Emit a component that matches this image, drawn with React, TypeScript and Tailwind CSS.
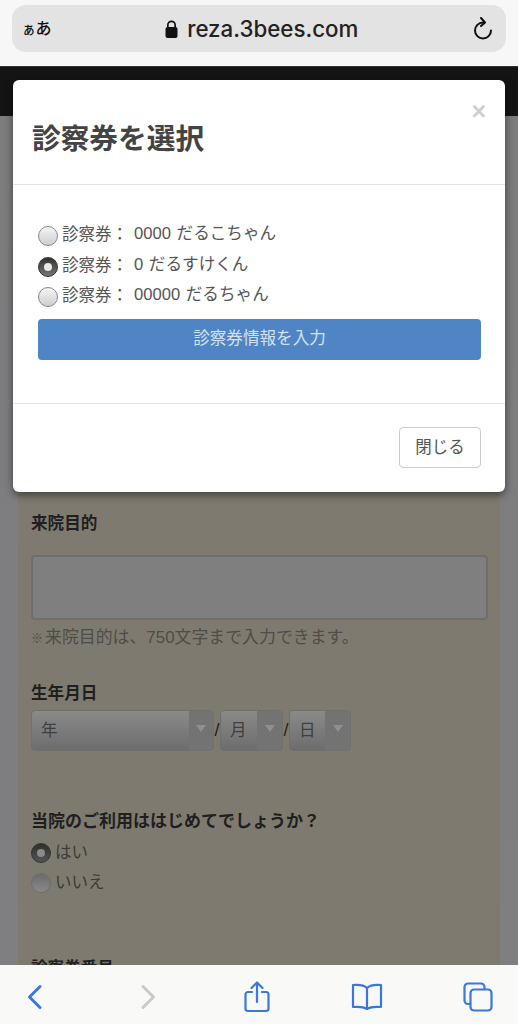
import React from "react";

const jp = "font-['Liberation_Sans','Noto_Sans_CJK_JP',sans-serif]";

function Radio({ on, dim }: { on?: boolean; dim?: boolean }) {
  if (on) {
    return (
      <span className={`flex h-[20px] w-[20px] shrink-0 items-center justify-center rounded-full border border-[#333] bg-gradient-to-b ${dim ? "from-[#2e2e2e] to-[#555]" : "from-[#333] to-[#777]"}`}>
        <span className={`h-[8px] w-[8px] rounded-full ${dim ? "bg-[#8a8a8a]" : "bg-[#e8e8e8]"}`} />
      </span>
    );
  }
  return (
    <span className={`block h-[20px] w-[20px] shrink-0 rounded-full border bg-gradient-to-b ${dim ? "border-[#6e6e6e] from-[#6a6a6a] to-[#8a8a8a]" : "border-[#8a8a8a] from-[#f4f4f4] to-[#cfcfcf]"}`} />
  );
}

function TicketRow({ on, id, name }: { on?: boolean; id: string; name: string }) {
  return (
    <div className="flex h-[30.5px] items-start">
      <span className="mt-[4px]"><Radio on={on} /></span>
      <span className="ml-[4px] w-[72px] shrink-0 whitespace-pre text-[16.5px] leading-[24px] text-[#555]">診察券：</span>
      <span className="whitespace-pre text-[16.6px] leading-[24px] text-[#555] [word-spacing:1px]">{id} {name}</span>
    </div>
  );
}

function Select({ w, label, arrowW }: { w: string; label: string; arrowW: string }) {
  return (
    <div className={`flex h-[41px] ${w} overflow-hidden rounded-[4px] border border-[#6f6f6b] bg-gradient-to-b from-[#8a8a8a] to-[#6d6d6d]`}>
      <span className="flex-1 pl-[9px] text-[16.5px] leading-[39px] text-[#3f3f3f]">{label}</span>
      <span className={`flex ${arrowW} items-start justify-center bg-[#737373] pt-[14px]`}>
        <span className="h-0 w-0 border-x-[5px] border-t-[7px] border-x-transparent border-t-[#8f8f8f]" />
      </span>
    </div>
  );
}

export default function App() {
  return (
    <div className={`relative flex h-[1024px] w-[518px] flex-col overflow-hidden bg-[#7f7f80] ${jp}`}>
      <div className="flex h-[67px] shrink-0 flex-col border-b border-[#333] bg-[#f7f7f7] px-[12px] pt-[5px]">
        <div className="flex h-[47px] items-center justify-between rounded-[14px] bg-[#e3e3e3] pl-[10px] pr-[12px]">
          <span className="text-[16px] font-medium text-[#111]"><span className="text-[13.5px]">ぁ</span>あ</span>
          <div className="flex items-center gap-[9px]">
            <svg width="13" height="18" viewBox="0 0 13 18" fill="#111">
              <path d="M2 7V5a4.5 4.5 0 0 1 9 0v2h-1.7V5a2.8 2.8 0 0 0-5.6 0v2z" />
              <rect x="0.5" y="7" width="12" height="11" rx="2" />
            </svg>
            <span className="font-['Inter',sans-serif] text-[22.3px] font-medium text-[#222]">reza.3bees.com</span>
          </div>
          <svg width="22" height="24" viewBox="0 0 22 24" fill="none" stroke="#111" strokeWidth="2" strokeLinecap="round" strokeLinejoin="round">
            <path d="M12 5.500h-1a8 8 0 1 0 8 8" />
            <path d="M9 1l4 4.500-4 3.500" />
          </svg>
        </div>
      </div>

      <div className="h-[49px] shrink-0 bg-[#141414]" />

      <div className="flex-1 overflow-hidden bg-gradient-to-b from-[#7d7d7e] to-[#7f7f82] px-[18px]">
        <div className="h-[900px] bg-[#7e7a70] pl-[13px] pr-[12px] pt-[396px]">
          <h3 className="text-[16.6px] font-bold leading-[24px] text-[#1f1f1f]">来院目的</h3>
          <div className="mt-[19px] h-[65px] rounded-[4px] border-2 border-[#6e6e6e] bg-[#7f7f80]" />
          <p className="mt-[6px] text-[16.9px] leading-[24px] text-[#4e4d47]"><span className="text-[12px]">※</span><span className="ml-[2px]">来院目的は、750文字まで入力できます。</span></p>
          <h3 className="mt-[31px] text-[16.6px] font-bold leading-[24px] text-[#1f1f1f]">生年月日</h3>
          <div className="mt-[4px] flex items-center">
            <Select w="w-[183px]" label="年" arrowW="w-[24px]" />
            <span className="w-[6px] shrink-0 text-center text-[18px] text-[#222]">/</span>
            <Select w="w-[63px]" label="月" arrowW="w-[25px]" />
            <span className="w-[6px] shrink-0 text-center text-[18px] text-[#222]">/</span>
            <Select w="w-[62px]" label="日" arrowW="w-[25px]" />
          </div>
          <h3 className="mt-[59px] text-[17px] font-bold leading-[24px] text-[#1f1f1f]">当院のご利用ははじめてでしょうか？</h3>
          <div className="mt-[6px] flex h-[30px] items-start">
            <span className="mt-[3px]"><Radio on dim /></span>
            <span className="ml-[4px] text-[16.5px] leading-[24px] text-[#3c3c38]">はい</span>
          </div>
          <div className="flex h-[30px] items-start">
            <span className="mt-[3px]"><Radio dim /></span>
            <span className="ml-[4px] text-[16.5px] leading-[24px] text-[#3c3c38]">いいえ</span>
          </div>
          <h3 className="mt-[57px] text-[16.6px] font-bold leading-[24px] text-[#1f1f1f]">診察券番号</h3>
        </div>
      </div>

      <div className="flex h-[59px] shrink-0 items-center bg-[#f9f9f7] pl-[27px] pt-[5px]">
        <svg width="16" height="26" viewBox="0 0 16 26" fill="none" stroke="#3a78dc" strokeWidth="3" strokeLinecap="round" strokeLinejoin="round"><path d="M13 2.500L2.500 13 13 23.500" /></svg>
        <svg className="ml-[97px]" width="16" height="26" viewBox="0 0 16 26" fill="none" stroke="#c9c9c9" strokeWidth="3" strokeLinecap="round" strokeLinejoin="round"><path d="M3 2.500L13.500 13 3 23.500" /></svg>
        <svg className="ml-[88px]" width="26" height="32" viewBox="0 0 26 32" fill="none" stroke="#3a78dc" strokeWidth="2.2" strokeLinecap="round" strokeLinejoin="round">
          <path d="M8 11H4a2.500 2.500 0 0 0-2.500 2.500v14A2.500 2.500 0 0 0 4 30h18a2.500 2.500 0 0 0 2.500-2.500v-14A2.500 2.500 0 0 0 22 11h-4" />
          <path d="M13 21V2M7.500 7L13 1.500 18.500 7" />
        </svg>
        <svg className="ml-[81px]" width="32" height="28" viewBox="0 0 32 28" fill="none" stroke="#3a78dc" strokeWidth="2.2" strokeLinecap="round" strokeLinejoin="round">
          <path d="M16 5C13 2 8 1.500 2 2v22c6-.5 11 0 14 2 3-2 8-2.500 14-2V2c-6-.5-11 0-14 3z" />
          <path d="M16 5v21" />
        </svg>
        <svg className="ml-[80px]" width="30" height="30" viewBox="0 0 30 30" fill="none" stroke="#3a78dc" strokeWidth="2.2" strokeLinejoin="round">
          <path d="M7 22H5a3.500 3.500 0 0 1-3.500-3.500V5A3.500 3.500 0 0 1 5 1.500h13A3.500 3.500 0 0 1 21.500 5v2" />
          <rect x="7.500" y="7.500" width="21" height="21" rx="3.500" />
        </svg>
      </div>

      <div className="absolute left-[13px] top-[80px] h-[412px] w-[492px] rounded-[6px] bg-white shadow-[0_3px_9px_rgba(0,0,0,0.5)]">
        <div className="relative h-[105px] border-b border-[#e5e5e5] pl-[19px] pt-[38px]">
          <h2 className="text-[28.7px] font-bold leading-[42px] text-[#444]">診察券を選択</h2>
          <span className="absolute right-[19px] top-[16px] font-['Liberation_Sans',sans-serif] text-[25px] font-bold leading-[30px] text-[#d0d0d0]">×</span>
        </div>
        <div className="h-[219px] border-b border-[#e5e5e5] pl-[25px] pr-[24px] pt-[37px]">
          <TicketRow id="0000" name="だるこちゃん" />
          <TicketRow on id="0" name="だるすけくん" />
          <TicketRow id="00000" name="だるちゃん" />
          <div className="mt-[5px] flex h-[41px] items-center justify-center rounded-[4px] bg-[#4f85c4] pt-[1px] text-[16.6px] text-[#d4e1f1]">診察券情報を入力</div>
        </div>
        <div className="flex justify-end pr-[24px] pt-[23px]">
          <div className="flex h-[41px] w-[82px] items-center justify-center rounded-[4px] border border-[#ccc] text-[16.5px] text-[#555]">閉じる</div>
        </div>
      </div>
    </div>
  );
}
